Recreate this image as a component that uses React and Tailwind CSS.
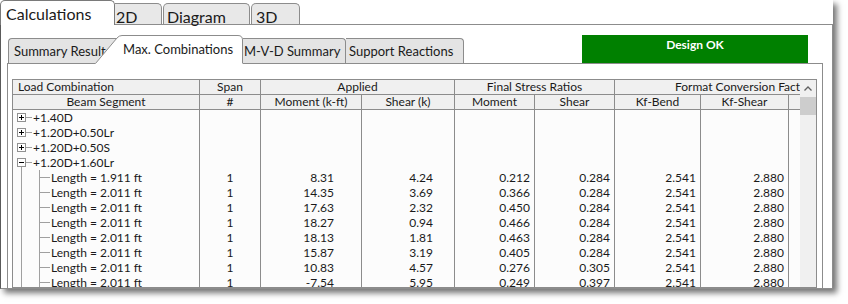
const LINE = "border-[#8c8c8c]";

const SEGMENTS = [
  ["1.911", "8.31", "4.24", "0.212", "0.284"],
  ["2.011", "14.35", "3.69", "0.366", "0.284"],
  ["2.011", "17.63", "2.32", "0.450", "0.284"],
  ["2.011", "18.27", "0.94", "0.466", "0.284"],
  ["2.011", "18.13", "1.81", "0.463", "0.284"],
  ["2.011", "15.87", "3.19", "0.405", "0.284"],
  ["2.011", "10.83", "4.57", "0.276", "0.305"],
  ["2.011", "-7.54", "5.95", "0.249", "0.397"],
];

const ROOTS = [
  { label: "+1.40D", open: false },
  { label: "+1.20D+0.50Lr", open: false },
  { label: "+1.20D+0.50S", open: false },
  { label: "+1.20D+1.60Lr", open: true },
];

function Expander({ open }) {
  return (
    <svg width="20" height="15" className="shrink-0">
      <rect x="4.5" y="3.5" width="8" height="8" fill="#fff" stroke="#919191" />
      <path d="M6 7.5h5" stroke="#000" />
      {!open && <path d="M8.5 5v5" stroke="#000" />}
      <path d="M13 7.5h6" stroke="#a0a0a0" />
      {open && <path d="M8.5 12v3" stroke="#a0a0a0" />}
    </svg>
  );
}

function Branch() {
  return (
    <svg width="38" height="15" className="shrink-0">
      <path d="M8.5 0v15M26.5 0v15M27 7.5h10" stroke="#a0a0a0" />
    </svg>
  );
}

function DataRow({ tree, label, cells = [] }) {
  const [span, moment, shear, mRatio, vRatio, kfb, kfv] = cells;
  return (
    <div className="flex h-[15px] leading-[15px] text-[12px] text-[#1a1a1a] bg-[#fcfcfc]">
      <div className={`w-[187px] flex border-r ${LINE} whitespace-nowrap overflow-hidden`}>
        {tree}
        <span>{label}</span>
      </div>
      <div className={`w-[61px] border-r ${LINE} text-center`}>{span}</div>
      <div className={`w-[101px] border-r ${LINE} text-right pr-[27px]`}>{moment}</div>
      <div className={`w-[93px] border-r ${LINE} text-right pr-[21px]`}>{shear}</div>
      <div className={`w-[80px] border-r ${LINE} text-right pr-[4px]`}>{mRatio}</div>
      <div className={`w-[80px] border-r ${LINE} text-right pr-[4px]`}>{vRatio}</div>
      <div className={`w-[86px] border-r ${LINE} text-right pr-[4px]`}>{kfb}</div>
      <div className={`w-[88px] border-r ${LINE} text-right pr-[4px]`}>{kfv}</div>
      <div className="w-[11px]" />
    </div>
  );
}

function ResultsGrid() {
  return (
    <div className={`flex border ${LINE} h-full overflow-hidden`}>
      <div className="w-[787px] flex flex-col">
        {/* header: group row */}
        <div className={`flex h-[15px] leading-[14px] text-[12px] bg-[#f0f0f0] border-b ${LINE}`}>
          <div className={`w-[187px] border-r ${LINE} pl-[5px]`}>Load Combination</div>
          <div className={`w-[61px] border-r ${LINE} text-center`}>Span</div>
          <div className={`w-[194px] border-r ${LINE} text-center`}>Applied</div>
          <div className={`w-[160px] border-r ${LINE} text-center`}>Final Stress Ratios</div>
          <div className="w-[185px] pl-[60px] whitespace-nowrap overflow-hidden">Format Conversion Factors</div>
        </div>
        {/* header: column row */}
        <div className={`flex h-[15px] leading-[14px] text-[12px] bg-[#f0f0f0] border-b ${LINE}`}>
          <div className={`w-[187px] border-r ${LINE} text-center`}>Beam Segment</div>
          <div className={`w-[61px] border-r ${LINE} text-center`}>#</div>
          <div className={`w-[101px] border-r ${LINE} text-center`}>Moment (k-ft)</div>
          <div className={`w-[93px] border-r ${LINE} text-center`}>Shear (k)</div>
          <div className={`w-[80px] border-r ${LINE} text-center`}>Moment</div>
          <div className={`w-[80px] border-r ${LINE} text-center`}>Shear</div>
          <div className={`w-[86px] border-r ${LINE} text-center`}>Kf-Bend</div>
          <div className={`w-[88px] border-r ${LINE} text-center`}>Kf-Shear</div>
          <div className="w-[11px]" />
        </div>
        <div className="flex-1 bg-[#fcfcfc]">
          {ROOTS.map((r) => (
            <DataRow key={r.label} tree={<Expander open={r.open} />} label={r.label} />
          ))}
          {SEGMENTS.map(([len, m, v, mr, vr], i) => (
            <DataRow
              key={i}
              tree={<Branch />}
              label={`Length = ${len} ft`}
              cells={["1", m, v, mr, vr, "2.541", "2.880"]}
            />
          ))}
        </div>
      </div>
      {/* scrollbar */}
      <div className="w-[16px] bg-[#f0f0f0] flex flex-col">
        <svg width="16" height="17">
          <path d="M4.5 10.5l3.5-3.5 3.5 3.5" fill="none" stroke="#606060" strokeWidth="1.3" />
        </svg>
        <div className="h-[18px] bg-[#cdcdcd]" />
      </div>
    </div>
  );
}

function SubTabs() {
  return (
    <div className="flex items-end h-[28px] text-[13px] leading-[13px] text-[#1a1a1a]">
      <div className={`ml-[1px] w-[113px] h-[25px] bg-[#e4e4e4] border-l border-t ${LINE} rounded-tl-[4px] pl-[5px] pt-[6px] whitespace-nowrap overflow-hidden`}>
        Summary Result
      </div>
      <div className="relative z-10 -ml-[26px] w-[148px] h-[28px]">
        <svg width="148" height="29" className="absolute left-0 top-0">
          <path d="M0 29L22 3Q24 0.5 27 0.5H143Q147.5 0.5 147.5 5V29Z" fill="#fff" />
          <path d="M0.5 28.5L22 3Q24 0.5 27 0.5H143Q147.5 0.5 147.5 5V28" fill="none" stroke="#8c8c8c" />
        </svg>
        <div className="relative pl-[28px] pt-[8px] whitespace-nowrap">Max. Combinations</div>
      </div>
      <div className={`w-[103px] h-[25px] bg-[#e4e4e4] border-t border-r ${LINE} rounded-tr-[4px] pl-[1px] pt-[6px] whitespace-nowrap`}>
        M-V-D Summary
      </div>
      <div className={`w-[118px] h-[25px] bg-[#e4e4e4] border-t border-r ${LINE} rounded-tr-[4px] pl-[3px] pt-[6px] whitespace-nowrap`}>
        Support Reactions
      </div>
      <div className="ml-auto mr-[15px] w-[226px] h-[28px] bg-[#008000] text-white font-bold text-[12px] leading-[12px] text-center pt-[4px]">
        Design OK
      </div>
    </div>
  );
}

export default function App() {
  return (
    <div className="w-[848px] h-[304px] bg-white overflow-hidden font-['Lato',sans-serif] text-[#1a1a1a]">
      <div className="w-[833px] h-[289px] flex flex-col bg-white shadow-[4px_4px_6px_rgba(0,0,0,0.55)]">
        {/* window tabs */}
        <div className="flex h-[25px] shrink-0 text-[16px] leading-[16px]">
          <div className="w-[115px] h-[25px] bg-white border-l border-t border-r border-[#7a7a7a] rounded-t-[5px] pl-[5px] pt-[5px]">
            Calculations
          </div>
          <div className={`flex-1 flex items-end gap-[1px] border-b ${LINE}`}>
            <div className={`w-[47px] h-[21px] bg-[#e8e8e8] border-t border-r ${LINE} rounded-tr-[5px] pl-[1px] pt-[7px] leading-[12px]`}>
              2D
            </div>
            <div className={`w-[87px] h-[21px] bg-[#e8e8e8] border-t border-l border-r ${LINE} rounded-t-[5px] pl-[3px] pt-[7px] leading-[12px]`}>
              Diagram
            </div>
            <div className={`w-[49px] h-[21px] bg-[#e8e8e8] border-t border-l border-r ${LINE} rounded-t-[5px] pl-[4px] pt-[7px] leading-[12px]`}>
              3D
            </div>
          </div>
        </div>
        {/* window body */}
        <div className={`flex-1 min-h-0 border-l border-r border-b border-l-[#5a5a5a] ${LINE} pt-[10px] pl-[6px] pr-[9px] flex flex-col`}>
          <SubTabs />
          <div className={`flex-1 min-h-0 border-l border-t border-r ${LINE} pt-[15px] pl-[4px] pr-[5px]`}>
            <ResultsGrid />
          </div>
        </div>
      </div>
    </div>
  );
}
